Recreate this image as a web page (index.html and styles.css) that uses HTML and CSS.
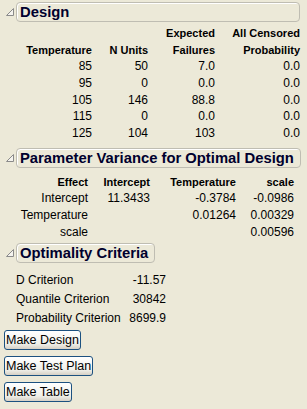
FILE: index.html
```html
<!DOCTYPE html>
<html lang="en">
<head>
<meta charset="UTF-8">
<title>Design</title>
<link rel="stylesheet" href="styles.css">
</head>
<body>

<!-- Design outline -->
<div class="outline stretch first">
  <div class="outline-head">
    <svg class="toggle" width="10" height="10" viewBox="0 0 10 10"><path d="M8.5 1.5 L8.5 8.5 L1.5 8.5 Z" fill="#f4f3ee" stroke="#8a8a8a" stroke-width="1"/></svg>
    <div class="title-box">Design</div>
  </div>
  <div class="outline-body">
    <table class="report design-table">
      <colgroup><col class="w76"><col class="w56"><col class="w67"><col class="w85"></colgroup>
      <tr class="head"><th></th><th></th><th>Expected</th><th>All Censored</th></tr>
      <tr class="head"><th>Temperature</th><th>N Units</th><th>Failures</th><th>Probability</th></tr>
      <tr><td>85</td><td>50</td><td>7.0</td><td>0.0</td></tr>
      <tr><td>95</td><td>0</td><td>0.0</td><td>0.0</td></tr>
      <tr><td>105</td><td>146</td><td>88.8</td><td>0.0</td></tr>
      <tr><td>115</td><td>0</td><td>0.0</td><td>0.0</td></tr>
      <tr><td>125</td><td>104</td><td>103</td><td>0.0</td></tr>
    </table>
  </div>
</div>

<!-- Parameter variance outline -->
<div class="outline second">
  <div class="outline-head">
    <svg class="toggle" width="10" height="10" viewBox="0 0 10 10"><path d="M8.5 1.5 L8.5 8.5 L1.5 8.5 Z" fill="#f4f3ee" stroke="#8a8a8a" stroke-width="1"/></svg>
    <div class="title-box">Parameter Variance for Optimal Design</div>
  </div>
  <div class="outline-body">
    <table class="report variance-table">
      <colgroup><col class="w72"><col class="w62"><col class="w86"><col class="w58"></colgroup>
      <tr class="head"><th>Effect</th><th>Intercept</th><th>Temperature</th><th>scale</th></tr>
      <tr><td>Intercept</td><td>11.3433</td><td>-0.3784</td><td>-0.0986</td></tr>
      <tr><td>Temperature</td><td></td><td>0.01264</td><td>0.00329</td></tr>
      <tr><td>scale</td><td></td><td></td><td>0.00596</td></tr>
    </table>
  </div>
</div>

<!-- Optimality criteria outline -->
<div class="outline third">
  <div class="outline-head">
    <svg class="toggle" width="10" height="10" viewBox="0 0 10 10"><path d="M8.5 1.5 L8.5 8.5 L1.5 8.5 Z" fill="#f4f3ee" stroke="#8a8a8a" stroke-width="1"/></svg>
    <div class="title-box">Optimality Criteria</div>
  </div>
  <div class="outline-body">
    <table class="report criteria-table">
      <colgroup><col class="w110"><col class="w40"></colgroup>
      <tr><td>D Criterion</td><td>-11.57</td></tr>
      <tr><td>Quantile Criterion</td><td>30842</td></tr>
      <tr><td>Probability Criterion</td><td>8699.9</td></tr>
    </table>
  </div>
</div>

<div class="buttons">
  <button type="button">Make Design</button>
  <button type="button">Make Test Plan</button>
  <button type="button">Make Table</button>
</div>

</body>
</html>
```

FILE: styles.css
```css
body {
  margin: 0;
  background: #ece9d8;
  font-family: "Liberation Sans", Arial, sans-serif;
  font-size: 12px;
  color: #000;
}
/* Outline boxes */
.outline {
  width: fit-content;
}
.outline.first {
  padding-top: 2px;
}
.outline.second {
  margin-top: 7px;
}
.outline.third {
  margin-top: 3px;
}
.outline-head {
  display: flex;
  align-items: center;
}
.toggle {
  width: 16px;
  flex: none;
  padding-left: 4px;
  box-sizing: border-box;
}
.title-box {
  height: 20px;
  box-sizing: border-box;
  padding: 0 6px 0 3px;
  border: 1px solid #bfbdb2;
  border-radius: 4px;
  box-shadow: inset 1px 1px 0 #fff;
  font-size: 14.8px;
  font-weight: bold;
  line-height: 18px;
  color: #00002e;
  white-space: nowrap;
}
.stretch .title-box {
  flex: 1;
}
.outline-body {
  padding-left: 16px;
}
/* Report tables */
.report {
  border-collapse: collapse;
  table-layout: fixed;
}
.report th, .report td {
  padding: 0;
  text-align: right;
  white-space: nowrap;
}
.report th {
  font-size: 11px;
  font-weight: bold;
}
.design-table {
  margin-top: 3px;
}
.design-table tr {
  height: 16.6px;
}
.variance-table {
  margin-top: 5px;
}
.variance-table tr {
  height: 16.7px;
}
.criteria-table {
  margin-top: 8px;
}
.criteria-table tr {
  height: 19px;
}
.criteria-table td:first-child {
  text-align: left;
}
.w40 { width: 40px; }
.w56 { width: 56px; }
.w58 { width: 58px; }
.w62 { width: 62px; }
.w67 { width: 67px; }
.w72 { width: 72px; }
.w76 { width: 76px; }
.w85 { width: 85px; }
.w86 { width: 86px; }
.w110 { width: 110px; }
/* Buttons */
.buttons {
  display: flex;
  flex-direction: column;
  align-items: flex-start;
  gap: 6px;
  padding: 2px 0 0 4px;
}
.buttons button {
  height: 20px;
  padding: 0 1px;
  border: 1px solid #1c5180;
  border-radius: 3px;
  background: linear-gradient(#ffffff, #f0f0ea 70%, #d6d0c5);
  font-family: "Liberation Sans", Arial, sans-serif;
  font-size: 12.5px;
  line-height: 18px;
  color: #000;
  cursor: pointer;
}
```
